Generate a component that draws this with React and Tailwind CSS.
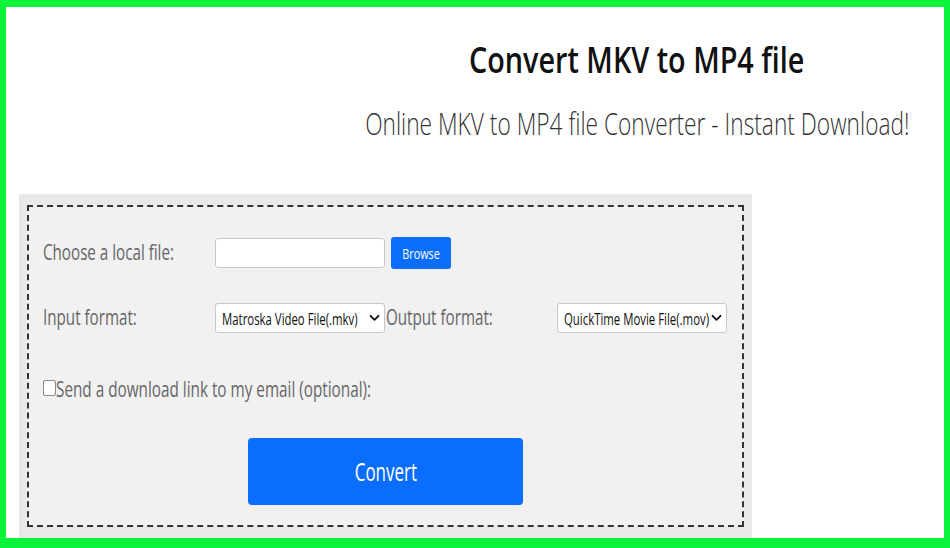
import React from "react";

const F = { fontFamily: '"Open Sans", "Noto Sans", Arial, sans-serif' };

function Chevron() {
  return (
    <svg width="11" height="8" viewBox="0 0 11 8" className="shrink-0">
      <path d="M1.5 1.8 L5.5 5.8 L9.5 1.8" fill="none" stroke="#111" strokeWidth="1.8" strokeLinecap="round" strokeLinejoin="round" />
    </svg>
  );
}

function Select({ text }) {
  return (
    <div className="w-[170px] h-[30px] bg-white border border-[#c8c8c8] rounded-[3px] flex items-center justify-between pl-[6px] pr-[4px] overflow-hidden">
      <span className="inline-block origin-left scale-x-[0.67] whitespace-nowrap text-[17px] text-[#111] leading-none w-[145px]">{text}</span>
      <Chevron />
    </div>
  );
}

function Label({ children, w }) {
  return (
    <div className={`${w} shrink-0`}>
      <span className="inline-block origin-left scale-x-[0.69] whitespace-nowrap text-[22px] text-[#666] leading-none">{children}</span>
    </div>
  );
}

export default function App() {
  return (
    <div style={F} className="w-[950px] h-[548px] bg-[#0cf33b] pt-[7px] pl-[6px] pr-[6px] pb-[10px]">
      <div className="w-full h-full bg-white flex flex-col overflow-hidden">
        <div className="h-[187px] shrink-0 pl-[324px] flex flex-col items-center">
          <div className="pt-[28px] h-[77px]">
            <span className="inline-block origin-center scale-x-[0.8] whitespace-nowrap text-[36px] leading-[49px] font-semibold text-[#111]">
              Convert MKV to MP4 file
            </span>
          </div>
          <div className="mt-[17px]">
            <span className="inline-block origin-center scale-x-[0.71] whitespace-nowrap text-[32px] leading-[44px] font-light text-[#333]">
              Online MKV to MP4 file Converter - Instant Download!
            </span>
          </div>
        </div>
        <div className="ml-[13px] w-[733px] flex-1 bg-[#e9e9e9] pt-[11px] px-[8px] pb-[11px] flex">
          <div className="flex-1 border-2 border-dashed border-[#333] bg-[#f1f1f1] pl-[14px] flex flex-col">
            <div className="mt-[30px] h-[32px] flex items-center">
              <Label w="w-[172px]">Choose a local file:</Label>
              <div className="w-[170px] h-[30px] bg-white border border-[#c8c8c8] rounded-[3px]" />
              <div className="ml-[6px] w-[60px] h-[32px] bg-[#0b6dfb] rounded-[3px] flex items-center justify-center">
                <span className="inline-block scale-x-[0.72] whitespace-nowrap text-[15px] text-white leading-none">Browse</span>
              </div>
            </div>
            <div className="mt-[34px] h-[30px] flex items-center">
              <Label w="w-[172px]">Input format:</Label>
              <Select text="Matroska Video File(.mkv)" />
              <div className="w-[1px]" />
              <Label w="w-[171px]">Output format:</Label>
              <Select text="QuickTime Movie File(.mov)" />
            </div>
            <div className="mt-[43px] h-[24px] flex items-center">
              <div className="w-[13px] h-[16px] border border-[#8a8a8a] rounded-[2px] bg-white shrink-0" />
              <span className="inline-block origin-left scale-x-[0.695] whitespace-nowrap text-[22px] text-[#666] leading-none">
                Send a download link to my email (optional):
              </span>
            </div>
            <div className="mt-[38px] ml-[205px] w-[275px] h-[67px] bg-[#0b6dfb] rounded-[4px] flex items-center justify-center">
              <span className="inline-block scale-x-[0.68] whitespace-nowrap text-[25px] text-white leading-none">Convert</span>
            </div>
          </div>
        </div>
      </div>
    </div>
  );
}
